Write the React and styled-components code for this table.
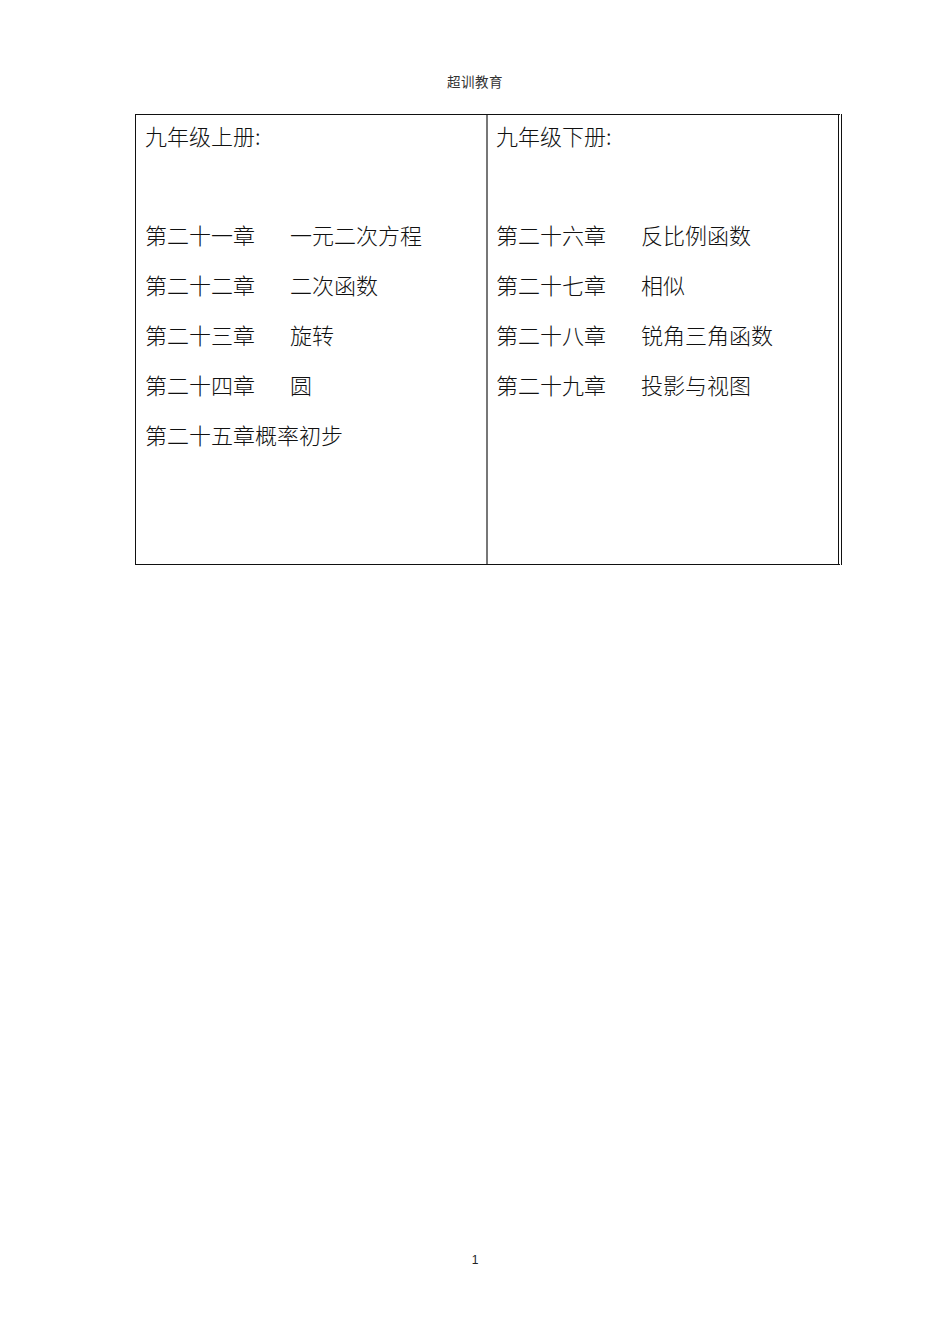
import React from "react";
import styled, { createGlobalStyle } from "styled-components";

const Global = createGlobalStyle`
  html, body { margin: 0; padding: 0; background: #fff; }
  body { font-family: "Noto Sans CJK SC", "Noto Sans", sans-serif; color: #111; }
`;

const Page = styled.div`
  width: 950px;
  height: 1344px;
  display: flex;
  flex-direction: column;
  align-items: center;
  box-sizing: border-box;
  padding-top: 71px;
`;

const Header = styled.div`
  font-size: 13.5px;
  line-height: 20px;
  color: #333;
  letter-spacing: 0.5px;
`;

const Table = styled.div`
  margin-top: 23px;
  align-self: flex-start;
  margin-left: 135px;
  display: grid;
  grid-template-columns: 350px 352px;
  height: 451px;
  box-sizing: border-box;
  border-top: 1.5px solid #111;
  border-left: 1.5px solid #111;
  border-bottom: 1.5px solid #111;
  border-right: 4.5px double #111;
`;

const Cell = styled.div`
  padding-left: ${(p) => (p.$divider ? "8px" : "9px")};
  box-sizing: border-box;
  border-left: ${(p) => (p.$divider ? "2px solid #777" : "none")};
  display: flex;
  flex-direction: column;
`;

const Heading = styled.div`
  font-size: 22px;
  line-height: 40px;
  font-weight: 300;
  margin-bottom: 54px;
`;

const Row = styled.div`
  display: grid;
  grid-template-columns: 145px auto;
  font-size: 22px;
  line-height: 50px;
  font-weight: 300;
  white-space: nowrap;
`;

const PageNum = styled.div`
  margin-top: auto;
  margin-bottom: 77px;
  font-family: "Liberation Sans", sans-serif;
  font-size: 12px;
  color: #222;
`;

const left = [
  ["第二十一章", "一元二次方程"],
  ["第二十二章", "二次函数"],
  ["第二十三章", "旋转"],
  ["第二十四章", "圆"],
  ["第二十五章概率初步", ""],
];
const right = [
  ["第二十六章", "反比例函数"],
  ["第二十七章", "相似"],
  ["第二十八章", "锐角三角函数"],
  ["第二十九章", "投影与视图"],
];

function Column({ title, rows, divider }) {
  return (
    <Cell $divider={divider}>
      <Heading>{title}</Heading>
      {rows.map(([a, b]) => (
        <Row key={a}>
          <span>{a}</span>
          <span>{b}</span>
        </Row>
      ))}
    </Cell>
  );
}

export default function App() {
  return (
    <>
      <Global />
      <Page>
        <Header>超训教育</Header>
        <Table>
          <Column title="九年级上册:" rows={left} />
          <Column title="九年级下册:" rows={right} divider />
        </Table>
        <PageNum>1</PageNum>
      </Page>
    </>
  );
}
